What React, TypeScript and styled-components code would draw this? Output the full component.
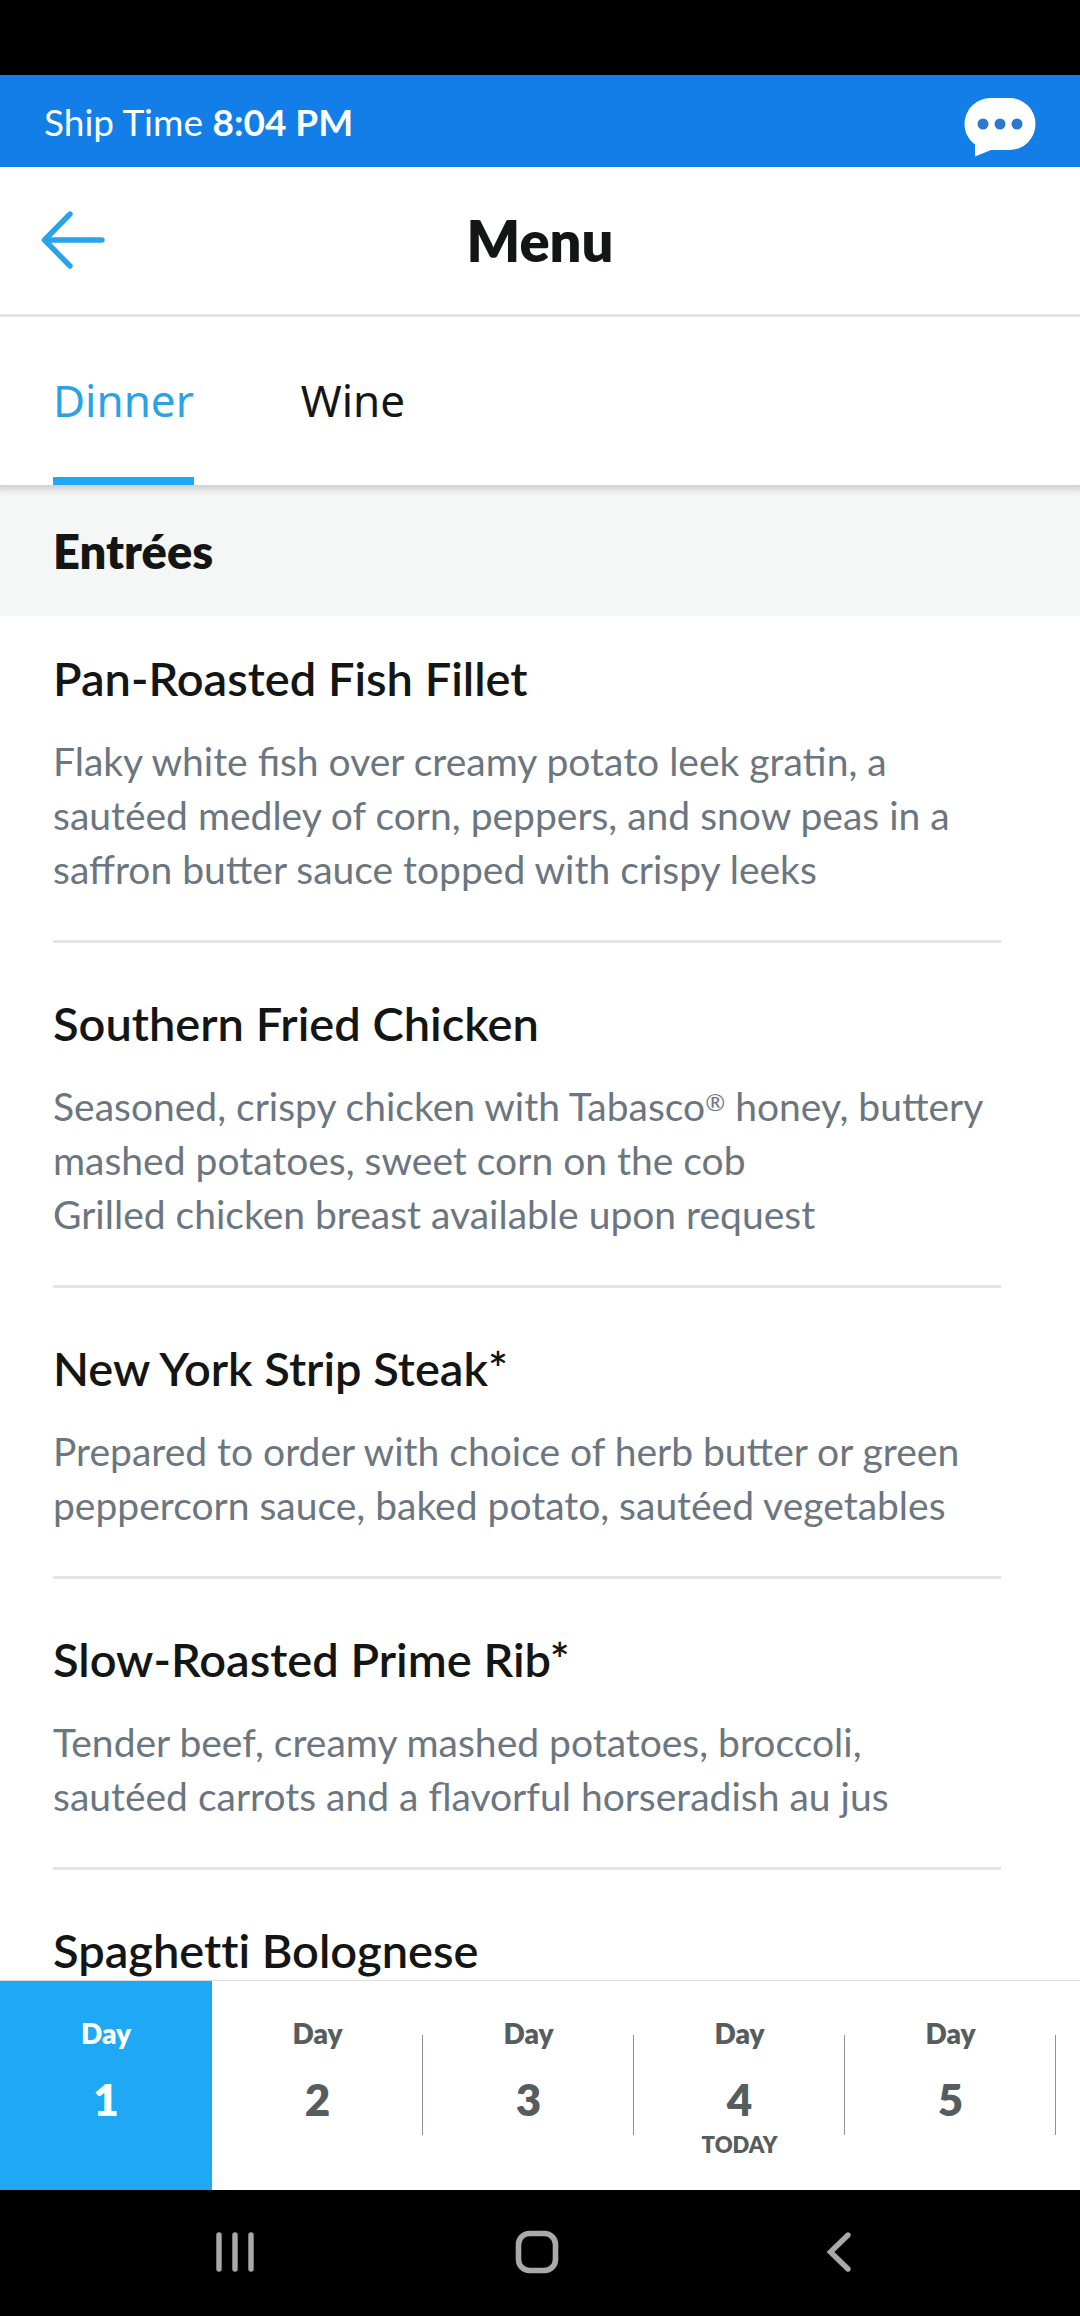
import React, { useState } from "react";
import type { ReactNode } from "react";
import styled, { createGlobalStyle } from "styled-components";

const GlobalStyle = createGlobalStyle`
  *, *::before, *::after { box-sizing: border-box; }
  body { margin: 0; background: #fff; }
  button { font: inherit; color: inherit; background: none; border: 0; padding: 0; cursor: pointer; }
  h1, h2, h3, p, ul { margin: 0; padding: 0; }
`;

const Screen = styled.div`
  display: flex;
  flex-direction: column;
  height: 100vh;
  background: #fff;
  color: #141616;
  font-family: Lato, "Liberation Sans", sans-serif;
`;

const CameraStrip = styled.div`
  flex: none;
  height: 75px;
  background: #000;
`;

const ShipBar = styled.div`
  flex: none;
  display: flex;
  align-items: center;
  justify-content: space-between;
  height: 92px;
  padding: 0 44px;
  background: #137ee8;
  color: #fff;
`;

const ShipTime = styled.p`
  padding-top: 2px;
  font-size: 37px;
  line-height: 44px;
`;

const ChatButton = styled.button`
  display: flex;
  padding-top: 12px;
`;

const Header = styled.header`
  position: relative;
  z-index: 1;
  flex: none;
  display: grid;
  grid-template-columns: 1fr auto 1fr;
  align-items: center;
  height: 150px;
  padding: 0 40px;
  background: #fff;
  border-bottom: 3px solid #e6e6e6;
`;

const BackButton = styled.button`
  display: flex;
  justify-self: start;
  padding-bottom: 2px;
`;

const PageTitle = styled.h1`
  font-size: 56px;
  line-height: 64px;
  font-weight: 800;
`;

const Tabs = styled.div`
  position: relative;
  flex: none;
  display: flex;
  gap: 107px;
  height: 168px;
  padding: 0 53px;
  box-shadow: 0 0 8px 4px rgba(0, 0, 0, 0.18);
`;

const Tab = styled.button<{ $active: boolean }>`
  border-top: 6px solid transparent;
  border-bottom: 8px solid ${(p) => (p.$active ? "#1fa9f5" : "transparent")};
  color: ${(p) => (p.$active ? "#2ba3e3" : "#141616")};
  font-family: "Noto Sans", sans-serif;
  font-size: 44px;
  font-weight: 400;
`;

const MenuList = styled.main`
  flex: 1;
  min-height: 0;
  overflow-y: auto;
  scrollbar-width: none;
`;

const SectionTitle = styled.h2`
  padding: 36px 53px 35px;
  background: #f5f7f7;
  font-size: 47px;
  line-height: 60px;
  font-weight: 800;
`;

const Dishes = styled.ul`
  list-style: none;
  padding: 0 79px 0 53px;
`;

const Dish = styled.li`
  padding: 50px 0 44px;
  border-bottom: 3px solid #e4e4e4;

  &:first-child { padding-top: 32px; }
  &:last-child { border-bottom: 0; }
`;

const DishName = styled.h3`
  font-size: 47px;
  line-height: 60px;
  font-weight: 600;
  font-variant-ligatures: none;
`;

const DishText = styled.p`
  margin-top: 26px;
  color: #6b7680;
  font-size: 39px;
  line-height: 54px;
`;

const TextLine = styled.span`
  display: block;
`;

const Registered = styled.span`
  font-size: 24px;
  line-height: 0;
  vertical-align: 10px;
`;

const DayStrip = styled.nav`
  flex: none;
  display: flex;
  height: 210px;
  overflow: hidden;
  border-top: 1px solid #dcdedf;
`;

const DayButton = styled.button<{ $active: boolean }>`
  position: relative;
  flex: 0 0 211px;
  display: flex;
  flex-direction: column;
  align-items: center;
  padding-top: 34px;
  background: ${(p) => (p.$active ? "#1fa9f5" : "#fff")};
  color: ${(p) => (p.$active ? "#fff" : "#565d5e")};
  font-weight: 800;

  &:first-child { flex-basis: 212px; }

  &::after {
    content: "";
    position: absolute;
    top: 54px;
    right: 0;
    width: 1px;
    height: 100px;
    background: ${(p) => (p.$active ? "transparent" : "#8c9192")};
  }
`;

const DayLabel = styled.span`
  font-size: 28px;
  line-height: 36px;
`;

const DayNumber = styled.span`
  margin-top: 18px;
  font-size: 44px;
  line-height: 60px;
`;

const TodayMark = styled.span`
  margin-top: 2px;
  font-size: 22px;
  line-height: 28px;
`;

const SystemBar = styled.nav`
  flex: none;
  display: grid;
  grid-template-columns: repeat(3, 1fr);
  height: 126px;
  padding: 0 90px 0 84px;
  background: #000;
`;

const SystemButton = styled.button`
  display: flex;
  align-items: center;
  justify-content: center;
  padding-bottom: 3px;
`;

type DishData = { name: string; lines: ReactNode[] };

const dishes: DishData[] = [
  {
    name: "Pan-Roasted Fish Fillet",
    lines: [
      "Flaky white fish over creamy potato leek gratin, a",
      "sautéed medley of corn, peppers, and snow peas in a",
      "saffron butter sauce topped with crispy leeks",
    ],
  },
  {
    name: "Southern Fried Chicken",
    lines: [
      <>
        Seasoned, crispy chicken with Tabasco<Registered>®</Registered> honey, buttery
      </>,
      "mashed potatoes, sweet corn on the cob",
      "Grilled chicken breast available upon request",
    ],
  },
  {
    name: "New York Strip Steak*",
    lines: [
      "Prepared to order with choice of herb butter or green",
      "peppercorn sauce, baked potato, sautéed vegetables",
    ],
  },
  {
    name: "Slow-Roasted Prime Rib*",
    lines: [
      "Tender beef, creamy mashed potatoes, broccoli,",
      "sautéed carrots and a flavorful horseradish au jus",
    ],
  },
  { name: "Spaghetti Bolognese", lines: [] },
];

const days = [1, 2, 3, 4, 5];
const today = 4;

const ChatIcon = () => (
  <svg width="72" height="60" viewBox="0 0 72 60" aria-hidden="true">
    <path
      fill="#fff"
      d="M26.500 1H45.500a26 26 0 0 1 0 52H27L11 59.500V47.500C4.500 42.500.5 35.500.5 27A26 26 0 0 1 26.500 1Z"
    />
    <g fill="#2a78d0">
      <circle cx="19" cy="27" r="5.500" />
      <circle cx="36" cy="27" r="5.500" />
      <circle cx="53" cy="27" r="5.500" />
    </g>
  </svg>
);

const BackIcon = () => (
  <svg width="68" height="62" viewBox="0 0 68 62" fill="none" stroke="#29a4e8" strokeWidth="5.400" strokeLinecap="round" strokeLinejoin="round" aria-hidden="true">
    <path d="M30 5 4.500 31 30 57M4.500 31H62" />
  </svg>
);

export default function App() {
  const [tab, setTab] = useState("Dinner");
  const [day, setDay] = useState(1);

  return (
    <Screen>
      <GlobalStyle />
      <CameraStrip />
      <ShipBar>
        <ShipTime>
          Ship Time <b>8:04 PM</b>
        </ShipTime>
        <ChatButton aria-label="Chat">
          <ChatIcon />
        </ChatButton>
      </ShipBar>
      <Header>
        <BackButton aria-label="Back">
          <BackIcon />
        </BackButton>
        <PageTitle>Menu</PageTitle>
      </Header>
      <Tabs role="tablist">
        {["Dinner", "Wine"].map((name) => (
          <Tab key={name} role="tab" aria-selected={tab === name} $active={tab === name} onClick={() => setTab(name)}>
            {name}
          </Tab>
        ))}
      </Tabs>
      <MenuList>
        <SectionTitle>Entrées</SectionTitle>
        <Dishes>
          {dishes.map((dish) => (
            <Dish key={dish.name}>
              <DishName>{dish.name}</DishName>
              {dish.lines.length > 0 && (
                <DishText>
                  {dish.lines.map((line, i) => (
                    <TextLine key={i}>{line}</TextLine>
                  ))}
                </DishText>
              )}
            </Dish>
          ))}
        </Dishes>
      </MenuList>
      <DayStrip aria-label="Cruise days">
        {days.map((n) => (
          <DayButton key={n} $active={day === n} onClick={() => setDay(n)}>
            <DayLabel>Day</DayLabel>
            <DayNumber>{n}</DayNumber>
            {n === today && <TodayMark>TODAY</TodayMark>}
          </DayButton>
        ))}
      </DayStrip>
      <SystemBar aria-label="System">
        <SystemButton aria-label="Recent apps">
          <svg width="44" height="44" viewBox="0 0 44 44" stroke="#a9a9a9" strokeWidth="5.400" strokeLinecap="round" aria-hidden="true">
            <path d="M6 5v34M22 5v34M38 5v34" />
          </svg>
        </SystemButton>
        <SystemButton aria-label="Home">
          <svg width="44" height="44" viewBox="0 0 44 44" fill="none" stroke="#a9a9a9" strokeWidth="5.600" aria-hidden="true">
            <rect x="3.500" y="3.500" width="37" height="37" rx="11" />
          </svg>
        </SystemButton>
        <SystemButton aria-label="System back">
          <svg width="44" height="44" viewBox="0 0 44 44" fill="none" stroke="#a9a9a9" strokeWidth="5.400" strokeLinecap="round" aria-hidden="true">
            <path d="M31 5 13.500 22 31 39" />
          </svg>
        </SystemButton>
      </SystemBar>
    </Screen>
  );
}
